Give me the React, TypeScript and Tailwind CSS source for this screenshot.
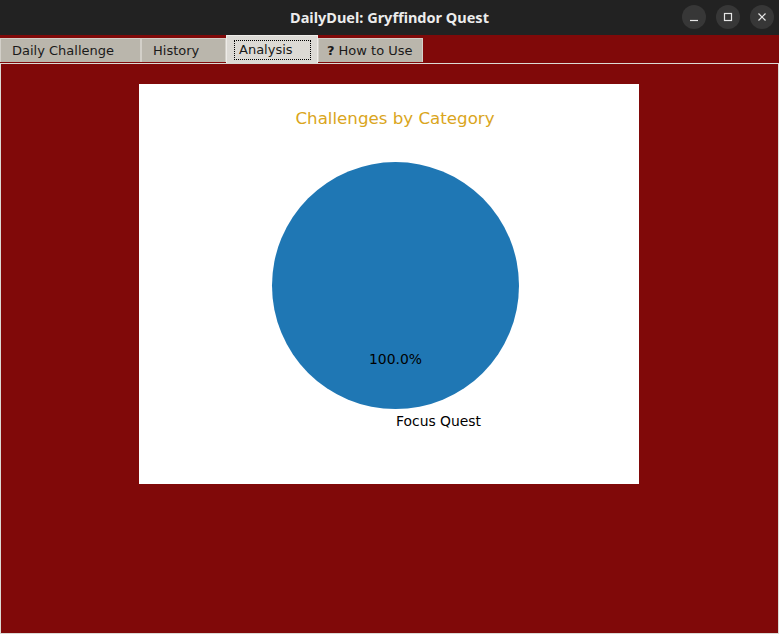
import React from "react";

const tabs = [
  { label: "Daily Challenge", w: "w-[141px]", active: false },
  { label: "History", w: "w-[85px]", active: false },
  { label: "Analysis", w: "w-[92px]", active: true },
  { label: "How to Use", w: "w-[105px]", active: false, help: true },
];

function WindowButton({ kind }: { kind: "min" | "max" | "close" }) {
  return (
    <div className="w-[24px] h-[24px] rounded-full bg-[#373737] flex items-center justify-center">
      <svg width="10" height="10" viewBox="0 0 10 10" fill="none" stroke="#e6e6e6" strokeWidth="1.2">
        {kind === "min" && <line x1="1" y1="8.5" x2="9" y2="8.5" />}
        {kind === "max" && <rect x="1.5" y="1.5" width="7" height="7" />}
        {kind === "close" && (
          <>
            <line x1="1.5" y1="1.5" x2="8.5" y2="8.5" />
            <line x1="8.5" y1="1.5" x2="1.5" y2="8.5" />
          </>
        )}
      </svg>
    </div>
  );
}

function PieChart() {
  return (
    <svg width="500" height="400" viewBox="0 0 500 400" className="block">
      <rect width="500" height="400" fill="#ffffff" />
      <text
        x="256"
        y="40"
        textAnchor="middle"
        fill="#daa520"
        fontSize="16.67"
        fontFamily="'DejaVu Sans', sans-serif"
      >
        Challenges by Category
      </text>
      <circle cx="256.5" cy="201.6" r="123.5" fill="#1f77b4" />
      <text
        x="256.5"
        y="280"
        textAnchor="middle"
        fill="#000000"
        fontSize="13.9"
        fontFamily="'DejaVu Sans', sans-serif"
      >
        100.0%
      </text>
      <text x="257" y="342" fill="#000000" fontSize="13.9" fontFamily="'DejaVu Sans', sans-serif">
        Focus Quest
      </text>
    </svg>
  );
}

export default function App() {
  return (
    <div className="w-[779px] h-[634px] flex flex-col bg-[#800909] font-['DejaVu_Sans',sans-serif] overflow-hidden">
      {/* Title bar */}
      <div className="h-[35px] bg-[#222222] flex items-center relative shrink-0">
        <div className="flex-1 text-center text-[#ececec] font-bold text-[14.5px] font-['Noto_Sans',sans-serif]">
          DailyDuel: Gryffindor Quest
        </div>
        <div className="absolute right-[5px] top-[5px] flex gap-[10px]">
          <WindowButton kind="min" />
          <WindowButton kind="max" />
          <WindowButton kind="close" />
        </div>
      </div>

      {/* Notebook tabs */}
      <div className="h-[28px] flex items-end shrink-0">
        {tabs.map((t, i) =>
          t.active ? (
            <div
              key={i}
              className={`${t.w} h-[28px] bg-[#dcdad5] border-t border-l border-r border-[#eeece8] flex items-center pl-[7px] text-[13px] text-[#1a1a1a]`}
            >
              <span className="border border-dotted border-black px-[4px] leading-[18px] w-[77px]">{t.label}</span>
            </div>
          ) : (
            <div
              key={i}
              className={`${t.w} h-[24px] mb-[1px] bg-[#bab6ac] border-t border-l border-r border-[#d3d0c9] flex items-center ${
                t.help ? "pl-[8px]" : "pl-[11px]"
              } text-[13px] text-[#1a1a1a]`}
            >
              {t.help && <span className="font-bold mr-[4px]">?</span>}
              {t.label}
            </div>
          )
        )}
      </div>

      {/* Tab panel */}
      <div className="flex-1 border border-[#dcdad5] bg-[#800909] pt-[20px] pl-[138px]">
        <div className="w-[500px] h-[400px]">
          <PieChart />
        </div>
      </div>
    </div>
  );
}
